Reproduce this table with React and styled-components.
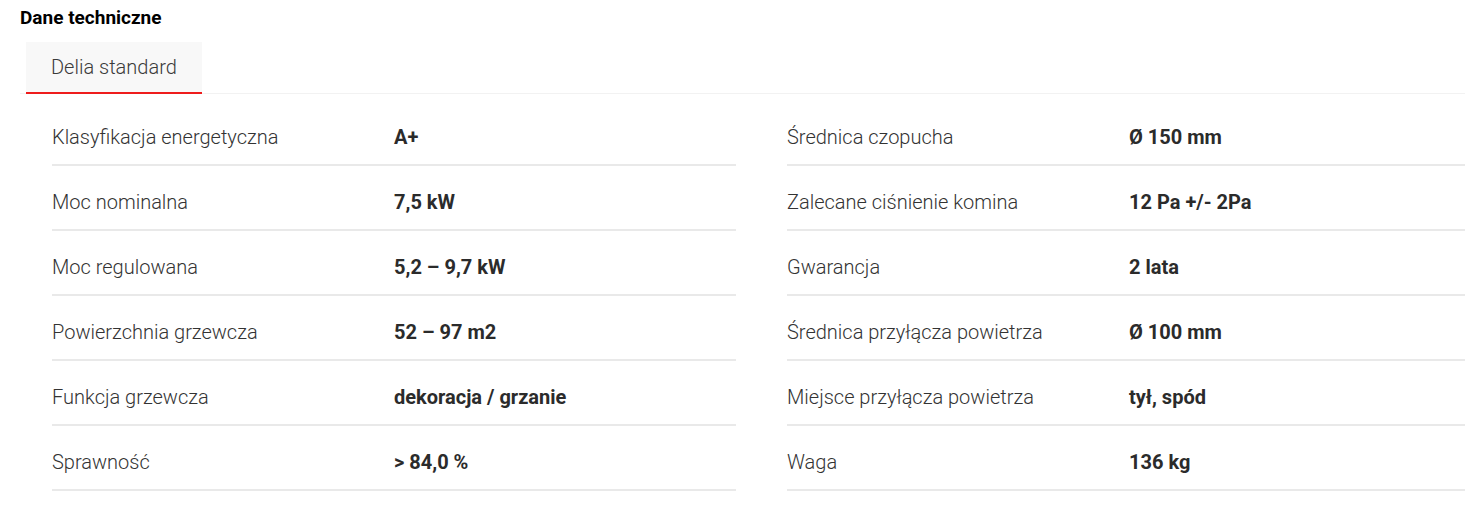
import React from 'react';
import styled, { createGlobalStyle } from 'styled-components';

const GlobalStyle = createGlobalStyle`
  body {
    margin: 0;
    background: #fff;
    font-family: Roboto, "Liberation Sans", sans-serif;
    overflow-x: hidden;
  }
`;

const Section = styled.section`
  padding: 7px 0 0 20px;
  width: 1445px;
`;

const Heading = styled.h2`
  margin: 0;
  font-size: 19px;
  line-height: 22px;
  font-weight: 700;
  color: #000;
`;

const TabBar = styled.div`
  display: flex;
  margin-top: 13px;
  border-bottom: 1.5px solid #f2f2f2;
`;

const Tab = styled.button`
  margin-left: 6px;
  padding: 0 25px;
  height: 52px;
  border: none;
  border-bottom: 2px solid ${p => (p.active ? '#ee1c1c' : 'transparent')};
  margin-bottom: -1.5px;
  background: ${p => (p.active ? '#f8f8f8' : 'transparent')};
  font-family: inherit;
  font-size: 20px;
  font-weight: 300;
  color: #3a3a3a;
  cursor: pointer;
`;

const Columns = styled.div`
  display: grid;
  grid-template-columns: 684px 684px;
  column-gap: 51px;
  padding: 7px 0 0 32px;
`;

const List = styled.div`
  display: flex;
  flex-direction: column;
`;

const Row = styled.div`
  display: grid;
  grid-template-columns: 342px 1fr;
  padding: 23px 0 14px;
  line-height: 26px;
  font-size: 20px;
  border-bottom: 2px solid #e9e9e9;
`;

const Label = styled.span`
  font-weight: 300;
  color: #333;
`;

const Value = styled.span`
  font-weight: 700;
  color: #2b2b2b;
`;

const left = [
  ['Klasyfikacja energetyczna', 'A+'],
  ['Moc nominalna', '7,5 kW'],
  ['Moc regulowana', '5,2 – 9,7 kW'],
  ['Powierzchnia grzewcza', '52 – 97 m2'],
  ['Funkcja grzewcza', 'dekoracja / grzanie'],
  ['Sprawność', '> 84,0 %'],
];

const right = [
  ['Średnica czopucha', 'Ø 150 mm'],
  ['Zalecane ciśnienie komina', '12 Pa +/- 2Pa'],
  ['Gwarancja', '2 lata'],
  ['Średnica przyłącza powietrza', 'Ø 100 mm'],
  ['Miejsce przyłącza powietrza', 'tył, spód'],
  ['Waga', '136 kg'],
];

const SpecList = ({ items }) => (
  <List>
    {items.map(([label, value]) => (
      <Row key={label}>
        <Label>{label}</Label>
        <Value>{value}</Value>
      </Row>
    ))}
  </List>
);

const App = () => (
  <>
    <GlobalStyle />
    <Section>
      <Heading>Dane techniczne</Heading>
      <TabBar>
        <Tab active>Delia standard</Tab>
      </TabBar>
      <Columns>
        <SpecList items={left} />
        <SpecList items={right} />
      </Columns>
    </Section>
  </>
);

export default App;
